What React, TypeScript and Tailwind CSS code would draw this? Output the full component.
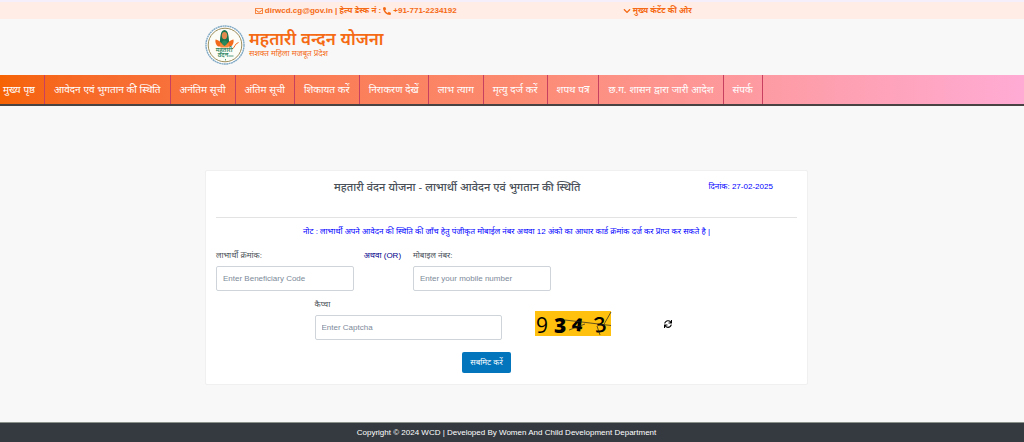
import React, { useState } from "react";
import { FaRegEnvelope, FaPhoneAlt, FaChevronDown, FaSync } from "react-icons/fa";

const menu = [
    "मुख्य पृष्ठ",
    "आवेदन एवं भुगतान की स्थिति",
    "अनंतिम सूची",
    "अंतिम सूची",
    "शिकायत करें",
    "निराकरण देखें",
    "लाभ त्याग",
    "मृत्यु दर्ज करें",
    "शपथ पत्र",
    "छ.ग. शासन द्वारा जारी आदेश",
    "संपर्क",
];

const inputClass =
    "block w-full h-[25px] px-1.5 bg-white border border-[#ced4da] rounded-xs text-[8px] text-[#495057] placeholder:text-[#7d8a99] outline-none focus:border-[#80bdff]";

function Logo() {
    return (
        <svg viewBox="0 0 40 40" className="w-10 h-10 shrink-0" aria-hidden="true">
            <circle cx="20" cy="20" r="19" fill="#fff" stroke="#7fa9c4" strokeWidth="1.4" strokeDasharray="2 0.4" />
            <circle cx="20" cy="20" r="16.8" fill="#fdfdf8" stroke="#8f7f45" strokeWidth="0.9" />
            {/* hair, face and sari */}
            <path d="M14.500 19C15.500 14 14.800 5 19.500 5S23.500 14 24.500 19Z" fill="#17744f" />
            <ellipse cx="19.500" cy="10.600" rx="2.700" ry="3.600" fill="#e08a50" />
            <path d="M16 21C16.500 16.500 18 15.500 19.500 15.500S22.500 16.500 23 21Z" fill="#2a8a5c" />
            {/* lotus */}
            <path d="M10.500 14.500C13.500 15 16.500 17 18.500 21.500H13C11 20 10 17.500 10.500 14.500Z" fill="#f26a1c" />
            <path d="M28.500 14.500C25.500 15 22.500 17 20.500 21.500H26C28 20 29 17.500 28.500 14.500Z" fill="#f26a1c" />
            <path d="M15 18L19.500 21L24 18L23.500 22.500H15.500Z" fill="#f58a3c" />
            <path d="M27 24C30 23 29.500 18.500 33.500 17.500" fill="none" stroke="#f26a1c" strokeWidth="1" />
            <text x="19" y="26.500" textAnchor="middle" fontSize="6" fontWeight="600" fill="#2b8562">महतारी</text>
            <text x="18" y="32" textAnchor="middle" fontSize="6" fontWeight="600" fill="#2b8562">वंदन</text>
            <path d="M23.500 31H28.500M20.500 34V35.500" stroke="#2b8562" strokeWidth="0.8" fill="none" />
        </svg>
    );
}

function Captcha() {
    return (
        <svg viewBox="0 0 76 25" className="w-[76px] h-[25px] overflow-visible" role="img" aria-label="Captcha">
            <rect width="76" height="25" fill="#ffc10e" />
            <g fill="#000" fontFamily="Open Sans, sans-serif">
                <text x="1" y="22" fontSize="21" fontWeight="500">9</text>
                <text x="19" y="22" fontSize="21" fontWeight="800">3</text>
                <text x="37" y="20" fontSize="18" fontWeight="800" transform="rotate(8 42 14)">4</text>
                <text x="59" y="21" fontSize="21" fontWeight="600" transform="rotate(-10 66 13)">3</text>
            </g>
            <path d="M30 9L76 14.500M34 19L50 13M68 15L76 1M62 15L65 24" stroke="#222" strokeWidth="0.7" fill="none" />
        </svg>
    );
}

export default function App() {
    const [code, setCode] = useState("");
    const [mobile, setMobile] = useState("");
    const [captcha, setCaptcha] = useState("");

    return (
        <div className="min-h-screen flex flex-col bg-[#f8f8f8] font-['Liberation_Sans','Noto_Sans',sans-serif] text-[#495057]">
            {/* Top strip */}
            <div className="border-t-2 border-[#f4effb] bg-[#ffede6] pr-[11px]">
                <div className="max-w-[603px] mx-auto grid grid-cols-2 text-[8px] leading-[17px] font-bold text-[#f56a14]">
                    <div className="flex items-center justify-center gap-0.5">
                        <FaRegEnvelope />
                        <a href="mailto:dirwcd.cg@gov.in">dirwcd.cg@gov.in</a>
                        <span>| हेल्प डेस्क नं :</span>
                        <FaPhoneAlt />
                        <a href="tel:+917712234192">+91-771-2234192</a>
                    </div>
                    <a href="#content" className="flex items-center justify-center gap-0.5">
                        <FaChevronDown />
                        मुख्य कंटेंट की ओर
                    </a>
                </div>
            </div>

            <header className="pr-[11px]">
                <div className="max-w-[603px] mx-auto flex items-center gap-1 h-14 pb-1">
                    <Logo />
                    <div className="pb-0.5 text-[#f56a14]">
                        <h1 className="text-[17px] leading-5 font-semibold">महतारी वन्दन योजना</h1>
                        <p className="text-[8px] leading-2">सशक्त महिला मजबूत प्रदेश</p>
                    </div>
                </div>
            </header>

            {/* Main menu */}
            <nav className="border-b-2 border-[#4a4343] bg-linear-to-r from-[#f66303] via-[#fc8a70] to-[#ffabd4]">
                <ul className="flex">
                    {menu.map((item) => (
                        <li key={item} className="border-r border-[#c8405f] first:-ml-1.5">
                            <a href="#" className="block px-[9px] text-[10px] leading-[29px] whitespace-nowrap text-white">
                                {item}
                            </a>
                        </li>
                    ))}
                </ul>
            </nav>

            <main id="content" className="flex-1 pt-16 pb-9 pr-[11px]">
                <form
                    onSubmit={(e) => e.preventDefault()}
                    className="max-w-[603px] mx-auto px-[5px] pb-[11px] bg-white border border-[#f0f0f0] rounded-xs text-[8px] leading-3"
                >
                    <div className="grid grid-cols-12 pt-2.5 pb-6">
                        <h2 className="col-span-10 text-center text-[11px] font-medium">
                            महतारी वंदन योजना - लाभार्थी आवेदन एवं भुगतान की स्थिति
                        </h2>
                        <p className="col-span-2 px-[5px] text-[#0000ff]">दिनांक: 27-02-2025</p>
                    </div>
                    <hr className="mx-[5px] border-[#e3e3e3]" />
                    <p className="py-2 text-center text-[#0000ff]">
                        नोट : लाभार्थी अपने आवेदन की स्थिति की जाँच हेतु पंजीकृत मोबाईल नंबर अथवा 12 अंको का आधार कार्ड क्रमांक दर्ज कर प्राप्त कर सकते है |
                    </p>

                    <div className="grid grid-cols-12 pt-1">
                        <div className="col-span-3 px-[5px]">
                            <label htmlFor="code" className="block pb-1">लाभार्थी क्रमांक:</label>
                            <input id="code" value={code} onChange={(e) => setCode(e.target.value)} placeholder="Enter Beneficiary Code" className={inputClass} />
                        </div>
                        <p className="px-[5px] whitespace-nowrap text-[#00008b]">अथवा (OR)</p>
                        <div className="col-span-3 px-[5px]">
                            <label htmlFor="mobile" className="block pb-1">मोबाइल नंबर:</label>
                            <input id="mobile" value={mobile} onChange={(e) => setMobile(e.target.value)} placeholder="Enter your mobile number" className={inputClass} />
                        </div>
                    </div>

                    <div className="grid grid-cols-12 items-end pt-2">
                        <div className="col-start-3 col-span-4 px-[5px]">
                            <label htmlFor="captcha" className="block pb-1">कैप्चा</label>
                            <input id="captcha" value={captcha} onChange={(e) => setCaptcha(e.target.value)} placeholder="Enter Captcha" className={inputClass} />
                        </div>
                        <div className="col-span-3 pl-7 pb-1">
                            <Captcha />
                        </div>
                        <button type="button" aria-label="Refresh" className="justify-self-start px-2.5 pb-3 text-black">
                            <FaSync />
                        </button>
                    </div>

                    <div className="grid grid-cols-12 pt-3">
                        <div className="col-start-6 col-span-3 px-[5px]">
                            <button type="submit" className="h-[21px] px-2 rounded-xs bg-[#0275bd] text-[8px] text-white">
                                सबमिट करें
                            </button>
                        </div>
                    </div>
                </form>
            </main>

            <footer className="border-t border-[#8b918b] bg-[#343a40] pr-[11px] text-center text-[8px] leading-[19px] text-white">
                Copyright © 2024 WCD | Developed By Women And Child Development Department
            </footer>
        </div>
    );
}
